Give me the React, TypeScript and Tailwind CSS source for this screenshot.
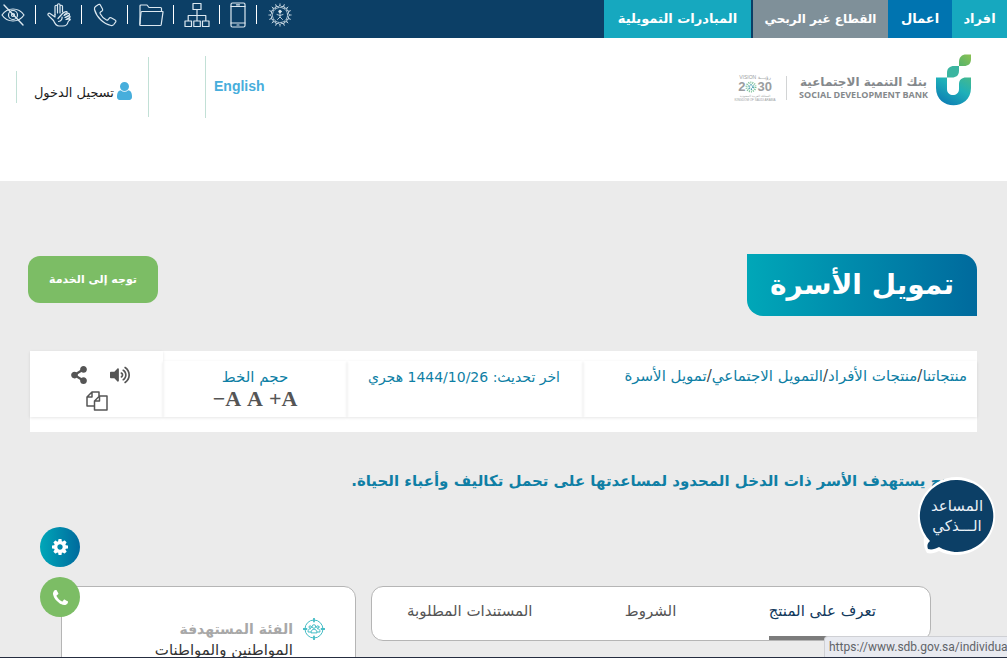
import React from "react";
import { FaVolumeUp, FaShareAlt } from "react-icons/fa";

const thin = {
  fill: "none",
  stroke: "currentColor",
  strokeWidth: 1.2,
  strokeLinecap: "round" as const,
  strokeLinejoin: "round" as const,
};

function EyeOffIcon() {
  return (
    <svg viewBox="0 0 24 24" className="h-6 w-6" {...thin}>
      <path d="M1 12c3-4.500 7-6 11-6s8 1.500 11 6c-3 4.500-7 6-11 6S4 16.500 1 12z" />
      <circle cx="12" cy="12" r="4.500" />
      <circle cx="12" cy="12" r="1.500" />
      <path d="M3 2l19 20" strokeWidth="1.400" />
    </svg>
  );
}

function HandsIcon() {
  return (
    <svg viewBox="0 0 24 24" className="h-6 w-6" {...thin}>
      <path d="M8 11.500V3.500a1.200 1.200 0 0 1 2.500 0V10M10.500 9V2a1.200 1.200 0 0 1 2.500 0v8M13 9V3.500a1.200 1.200 0 0 1 2.500 0V9" />
      <path d="M8 11.500v2.500L3 10.500c-1.300-.8-2.700.6-1.700 1.800l5.200 5.200c1 2.500 2.500 5.500 5.500 5.500h4c3.500 0 4.500-1.500 5-4l1.800-2.500M11 15.500l4-4.500c1-1 2.500-2 4-2.300 1.500-.2 1.500 1.300.5 1.600l-2 1.200" />
      <path d="M17 12.500l4-2c1.300-.5 2 1 .9 1.700L18 14.500M18.500 14.500l3.300-1.500c1.200-.4 1.800 1 .7 1.600L19 16.500M19.500 16.500l2.700-.7c1.100-.2 1.400 1.100.4 1.500M15 14c.5 2-1 4-3.500 4.500" />
    </svg>
  );
}

function HandsetIcon() {
  return (
    <svg viewBox="0 0 24 24" className="h-6 w-6" {...thin}>
      <path d="M2.500 3.500l3-2c.7-.4 1.400-.2 1.800.5L9.500 6c.4.800.2 1.500-.5 2L7.500 9c-.6.500-.6 1-.3 1.700 1.500 2.800 3.500 5 6.300 6.300.7.300 1.200.2 1.600-.4l1-1.300c.5-.7 1.300-.9 2-.5l4 2.200c.8.400 1 1.200.6 1.900l-1.900 2.600c-.7.900-1.700 1.200-2.800 1C10.500 21 3.500 14 1.500 6.500c-.2-1.200 0-2.200 1-3z" />
    </svg>
  );
}

function FolderIcon() {
  return (
    <svg viewBox="0 0 26 24" className="h-6 w-[26px]" {...thin}>
      <path d="M2 21V3c0-.6.400-1 1-1h6l2 2.500h11.500c.6 0 1 .4 1 1V8" />
      <path d="M4 8.500h20.500c.4 0 .6.300.5.700l-1.800 12.500c-.1.500-.4.800-1 .8H2.500c-.6 0-.8-.4-.7-.9L3 9.300c.1-.5.500-.8 1-.8z" />
    </svg>
  );
}

function SitemapIcon() {
  return (
    <svg viewBox="0 0 26 26" className="h-[26px] w-[26px]" {...thin} strokeLinecap="butt">
      <path d="M9 1.500h8v6H9zM1 19h6.500v5.500H1zM9.800 19h6.500v5.500H9.800zM18.500 19H25v5.500h-6.500zM13 7.500V19M4.200 19v-5.500h17.600V19" />
    </svg>
  );
}

function MobileIcon() {
  return (
    <svg viewBox="0 0 16 26" className="h-[26px] w-4" {...thin}>
      <rect x="1" y="1" width="14" height="24" rx="1.500" />
      <path d="M1 4.500h14M1 21h14M6.500 2.800h3M7 23h2" />
    </svg>
  );
}

function EmblemIcon() {
  const rays = Array.from({ length: 16 }, (_, i) => i * 22.5);
  return (
    <svg viewBox="0 0 24 24" className="h-6 w-6" {...thin} strokeWidth="0.8">
      <circle cx="12" cy="12" r="7.500" strokeDasharray="1.500 1" />
      {rays.map((a) => (
        <path key={a} d="M12 .8v1.400M10.500 3.800L12 2.300l1.500 1.500" transform={`rotate(${a} 12 12)`} />
      ))}
      <circle cx="12" cy="8.500" r="1.300" fill="currentColor" />
      <path d="M12 10v4M9 11.500l3 1 3-1M9.500 16.500l2.500-2.500 2.500 2.500" />
    </svg>
  );
}

function UserIcon() {
  return (
    <svg viewBox="256 128 1280 1536" className="-mt-1 h-[18px] w-[15px] text-[#47aedc]" fill="currentColor">
      <path d="M1536 1399q0 109-62.500 187t-150.500 78h-854q-88 0-150.500-78t-62.500-187q0-85 8.500-160.500t31.500-152 58.500-131 94-89 134.500-34.500q131 128 313 128t313-128q76 0 134.500 34.500t94 89 58.500 131 31.500 152 8.500 160.500zm-256-887q0 159-112.500 271.500t-271.500 112.500-271.500-112.500-112.500-271.500 112.500-271.500 271.500-112.500 271.500 112.500 112.500 271.500z" />
    </svg>
  );
}

function CogIcon() {
  return (
    <svg viewBox="0 128 1536 1536" className="h-4 w-4" fill="currentColor">
      <path d="M1024 896q0-106-75-181t-181-75-181 75-75 181 75 181 181 75 181-75 75-181zm512-109v222q0 12-8 23t-20 13l-185 28q-19 54-39 91 35 50 107 138 10 12 10 25t-9 23q-27 37-99 108t-94 71q-12 0-26-9l-138-108q-44 23-91 38-16 136-29 186-7 28-36 28h-222q-14 0-24.500-8.500t-11.500-21.500l-28-184q-49-16-90-37l-141 107q-10 9-25 9-14 0-25-11-126-114-165-168-7-10-7-23 0-12 8-23 15-21 51-66.500t54-70.500q-27-50-41-99l-183-27q-13-2-21-12.500t-8-23.500v-222q0-12 8-23t19-13l186-28q14-46 39-92-40-57-107-138-10-12-10-24 0-10 9-23 26-36 98.500-107.500t94.500-71.500q13 0 26 10l138 107q44-23 91-38 16-136 29-186 7-28 36-28h222q14 0 24.500 8.500t11.500 21.500l28 184q49 16 90 37l142-107q9-9 24-9 13 0 25 10 129 119 165 170 7 8 7 22 0 12-8 23-15 21-51 66.500t-54 70.500q26 50 41 98l183 28q13 2 21 12.500t8 23.500z" />
    </svg>
  );
}

function PhoneIcon() {
  return (
    <svg viewBox="0 128 1408 1408" className="h-[15px] w-[15px]" fill="currentColor">
      <path d="M1408 1240q0 27-10 70.500t-21 68.500q-21 50-122 106-94 51-186 51-27 0-53-3.500t-57.500-12.500-47-14.500-55.500-20.500-49-18q-98-35-175-83-127-79-264-216t-216-264q-48-77-83-175-3-9-18-49t-20.500-55.500-14.500-47-12.500-57.500-3.500-53q0-92 51-186 56-101 106-122 25-11 68.500-21t70.500-10q14 0 21 3 18 6 53 76 11 19 30 54t35 63.500 31 53.500q3 4 17.500 25t21.500 35.500 7 28.500q0 20-28.500 50t-62 55-62 53-28.500 46q0 9 5 22.500t8.500 20.500 14 24 11.500 19q76 137 174 235t235 174q2 1 19 11.500t24 14 20.500 8.500 22.500 5q18 0 46-28.500t53-62 55-62 50-28.500q14 0 28.500 7t35.500 21.500 25 17.500q25 15 53.500 31t63.500 35 54 30q70 35 76 53 3 7 3 21z" />
    </svg>
  );
}

function CopyIcon() {
  return (
    <svg viewBox="0 0 22 20" className="h-5 w-[22px]" fill="none" stroke="currentColor" strokeWidth="1.500" strokeLinejoin="round">
      <path d="M8 15H1V6l5-5h7v4M6 1v5H1" />
      <path d="M8.500 10l5-5H21v14H8.500zM13.500 5v5h-5" />
    </svg>
  );
}

function AudienceIcon() {
  return (
    <svg viewBox="0 0 22 22" className="h-[22px] w-[22px] text-[#46bdc6]" {...thin} strokeWidth="1">
      <circle cx="11" cy="11" r="9" />
      <path d="M11 .5v3M11 18.500v3M.5 11h3M18.500 11h3" strokeWidth="1.800" />
      <circle cx="11" cy="8.500" r="1.800" />
      <circle cx="7.200" cy="9" r="1.200" />
      <circle cx="14.800" cy="9" r="1.200" />
      <path d="M8 14.500c0-4.500 6-4.500 6 0zM8 14H5c0-2.500 1-3.300 2.500-3.300M14 14h3c0-2.500-1-3.300-2.500-3.300" />
    </svg>
  );
}

function BankMark() {
  return (
    <svg viewBox="0 0 36 52" className="h-[52px] w-9" aria-hidden="true">
      <defs>
        <linearGradient id="cup" x1="1" y1="0" x2="0.300" y2="1">
          <stop offset="0" stopColor="#45b98c" />
          <stop offset="0.450" stopColor="#1fb0b9" />
          <stop offset="1" stopColor="#0e7fb4" />
        </linearGradient>
        <linearGradient id="leaf" x1="1" y1="0" x2="0" y2="1">
          <stop offset="0" stopColor="#8cc152" />
          <stop offset="1" stopColor="#54b36b" />
        </linearGradient>
      </defs>
      <path d="M24 12V8c0-5 3-7.500 7-7.500h5V5c0 5-3 7-7 7z" fill="url(#leaf)" />
      <path d="M12 23.500V19c0-5 3-7 7-7h5v4.500c0 5-3 7-7 7z" fill="#3bb5a0" />
      <path d="M1 23.500h11V35c0 8 12 8 12 0v-4.500c0-5 3-7 7-7h5V34c0 23-35 23-35 0z" fill="url(#cup)" />
    </svg>
  );
}

const tools = [
  { label: "ضعاف البصر", icon: <EyeOffIcon />, size: "w-6" },
  { label: "لغة الإشارة", icon: <HandsIcon />, size: "w-[25px]" },
  { label: "اتصل بنا", icon: <HandsetIcon />, size: "w-[25px]" },
  { label: "الملفات", icon: <FolderIcon />, size: "w-[25px]" },
  { label: "خريطة الموقع", icon: <SitemapIcon />, size: "w-[25px]" },
  { label: "تطبيق الجوال", icon: <MobileIcon />, size: "w-4" },
  { label: "المنصة الوطنية", icon: <EmblemIcon />, size: "w-[25px]" },
];

const crumbs = ["منتجاتنا", "منتجات الأفراد", "التمويل الاجتماعي", "تمويل الأسرة"];

export default function App() {
  return (
    <div
      dir="rtl"
      className="relative flex h-screen flex-col overflow-hidden bg-[#ebebeb] font-['DejaVu_Sans',sans-serif] text-sm text-[#0f7fa5]"
    >
      <div className="flex h-[38px] shrink-0 justify-between bg-[#0c3f66] text-white">
        <nav className="flex text-[13px] font-bold">
          <a href="#individuals" className="flex w-[55px] items-center justify-center bg-[#16a8bf]">افراد</a>
          <a href="#business" className="flex w-16 items-center justify-center bg-[#0074b0]">اعمال</a>
          <a href="#nonprofit" className="flex w-[135px] items-center justify-center bg-[#7f9099] text-xs">القطاع غير الربحي</a>
          <a href="#initiatives" className="ms-0.5 flex w-[147px] items-center justify-center bg-[#16a8bf]">المبادرات التمويلية</a>
        </nav>
        <ul dir="ltr" className="flex h-[29px] items-center pl-px text-[#dce8f0]">
          {tools.map((tool, i) => (
            <li key={tool.label} className="flex items-center">
              {i > 0 && <span className="mx-[10px] h-[19px] w-px bg-white" />}
              <a href="#tool" aria-label={tool.label} className={`flex justify-center ${tool.size}`}>
                <span className="shrink-0">{tool.icon}</span>
              </a>
            </li>
          ))}
        </ul>
      </div>

      <header className="flex h-[143px] shrink-0 justify-between bg-white ps-9 pe-4">
        <div className="mt-4 flex h-[52px] items-center">
          <BankMark />
          <div className="ms-[7px] mt-4 flex flex-col items-center text-[#85898c]">
            <span className="text-xs font-bold leading-[13px]">بنك التنمية الاجتماعية</span>
            <span className="font-['Open_Sans',sans-serif] text-[9px] font-bold leading-[11px]">SOCIAL DEVELOPMENT BANK</span>
          </div>
          <span className="ms-3 mt-4 h-6 w-px bg-[#d2d4d5]" />
          <div className="ms-3 mt-4 flex w-[38px] flex-col items-center whitespace-nowrap font-['Liberation_Sans','DejaVu_Sans',sans-serif] text-[#9a9da0]">
            <span dir="ltr" className="text-[5px] leading-[6px]">VISION رؤيـــة</span>
            <span dir="ltr" className="flex items-center text-[13px] font-bold leading-[14px]">
              2
              <svg viewBox="0 0 12 12" className="h-3 w-3" fill="none" strokeWidth="2" strokeDasharray="1 1">
                <circle cx="6" cy="6" r="4.500" stroke="#7fc49c" />
                <circle cx="6" cy="6" r="2" stroke="#4ba4b0" />
              </svg>
              30
            </span>
            <span className="text-[3px] leading-[4px]">المملكة العربية السعودية</span>
            <span className="text-[3px] leading-[4px]">KINGDOM OF SAUDI ARABIA</span>
          </div>
        </div>
        <div className="flex">
          <div className="mt-[18px] flex h-[62px] w-[60px] items-center justify-end border-e border-[#c2e0d6] pb-0.5">
            <a href="#en" className="me-2 font-['Liberation_Sans',sans-serif] text-sm font-bold text-[#47aedc]">English</a>
          </div>
          <div className="ms-14 mt-[19px] h-[60px] w-px bg-[#c2e0d6]" />
          <div className="mt-[33px] flex h-8 w-[132px] justify-start border-e border-[#c2e0d6] ps-4">
            <a href="#login" className="mt-[10px] flex h-6 items-center gap-[3px] text-[13px] text-[#1c1c1c]">
              <UserIcon />
              تسجيل الدخول
            </a>
          </div>
        </div>
      </header>

      <main className="flex flex-col ps-[30px] pe-[28px] pt-[73px]">
        <div className="flex items-start justify-between">
          <h1 className="flex h-[62px] w-[230px] items-center justify-center rounded-tr-[16px] rounded-bl-[16px] bg-gradient-to-l from-[#006a9d] to-[#00a7b8] text-[28px] font-bold text-white">
            تمويل الأسرة
          </h1>
          <button className="mt-0.5 h-[47px] w-[130px] rounded-xl bg-[#7cbd65] text-[11px] font-bold text-white">توجه إلى الخدمة</button>
        </div>

        <section className="me-0.5 mt-[35px] flex bg-white pb-[15px]">
          <nav className="mt-[10px] flex h-14 flex-1 px-[10px] pt-2 shadow-[0_1px_3px_#0000001a]">
            <ol className="flex h-4 items-center whitespace-nowrap text-[15px]">
              {crumbs.map((c, i) => (
                <li key={c}>
                  {i > 0 && <span className="text-[#444]">/</span>}
                  <a href="#crumb">{c}</a>
                </li>
              ))}
            </ol>
          </nav>
          <div className="mt-[10px] h-14 w-[236px] whitespace-nowrap ps-[23px] pt-2 leading-4 shadow-[0_1px_3px_#0000001a]">
            اخر تحديث: 1444/10/26 هجري
          </div>
          <div className="mt-[10px] flex h-14 w-[184px] flex-col items-center pt-2 shadow-[0_1px_3px_#0000001a]">
            <span className="text-[15px] leading-4">حجم الخط</span>
            <div dir="ltr" className="mt-0.5 flex gap-1.5 font-['Liberation_Serif',serif] text-[22px] font-bold leading-6 text-[#555]">
              <button aria-label="تصغير الخط">−A</button>
              <button aria-label="الخط الأصلي">A</button>
              <button aria-label="تكبير الخط">+A</button>
            </div>
          </div>
          <div className="flex h-[66px] w-[133px] flex-col items-center pt-[14px] text-[#555] shadow-[0_1px_3px_#0000001a]">
            <div className="flex gap-[22px] pe-1.5">
              <button aria-label="استماع"><FaVolumeUp className="h-5 w-5" /></button>
              <button aria-label="مشاركة"><FaShareAlt className="h-[18px] w-[18px]" /></button>
            </div>
            <button aria-label="نسخ" className="mt-1.5"><CopyIcon /></button>
          </div>
        </section>

        <p className="mt-[37px] whitespace-nowrap ps-[14px] text-[15px] font-bold leading-6">
          منتج يستهدف الأسر ذات الدخل المحدود لمساعدتها على تحمل تكاليف وأعباء الحياة.
        </p>

        <div className="mt-[93px] flex items-start ps-[46px] pe-[33px]">
          <div className="flex h-[55px] flex-1 items-stretch justify-between rounded-xl border border-[#b5b5b5] bg-white ps-[54px] pe-[35px] text-[15px] text-[#555]">
            <button className="border-b-4 border-[#7c7c7c] text-[#12395c]">تعرف على المنتج</button>
            <button className="border-b-4 border-transparent">الشروط</button>
            <button className="border-b-4 border-transparent">المستندات المطلوبة</button>
          </div>
          <article className="ms-[15px] h-[300px] w-[295px] rounded-xl border border-[#b5b5b5] bg-white ps-[30px] pt-[31px]">
            <div className="flex gap-[10px]">
              <AudienceIcon />
              <div>
                <h2 className="text-sm font-bold leading-[22px] text-[#a8a8a8]">الفئة المستهدفة</h2>
                <p className="text-[15px] leading-5 text-[#333]">المواطنين والمواطنات</p>
              </div>
            </div>
          </article>
        </div>
      </main>

      <a href="#assistant" className="absolute right-[10px] top-[475px] h-[82px] w-[80px]">
        <svg viewBox="0 0 80 82" className="absolute inset-0 h-full w-full" aria-hidden="true">
          <path d="M40 2a39 39 0 1 1-18 74c-4 2-8 3-12 2-2-3-4-8-3-16A39 39 0 0 1 40 2z" fill="#fff" />
          <path d="M40 5a36 36 0 1 1-18 67c-4 2-7 3-11 2-1-3-1-5 2-8A36 36 0 0 1 40 5z" fill="#0c3f66" />
        </svg>
        <span className="relative flex h-[82px] flex-col justify-center text-center text-[15px] leading-5 text-[#e8f0f6]">
          <span>المساعد</span>
          <span>الـــذكي</span>
        </span>
      </a>

      <div className="absolute left-10 top-[527px] flex flex-col gap-[10px] text-white">
        <button aria-label="الإعدادات" className="flex h-10 w-10 items-center justify-center rounded-full bg-gradient-to-l from-[#006a9d] to-[#00a7b8]">
          <CogIcon />
        </button>
        <button aria-label="اتصال" className="flex h-10 w-10 items-center justify-center rounded-full bg-[#7cbd65]">
          <PhoneIcon />
        </button>
      </div>

      <div dir="ltr" className="absolute bottom-0 right-0 h-[22px] w-[183px] overflow-hidden whitespace-nowrap rounded-tl-sm border-l border-t border-[#cfd0d4] bg-[#e8eaf0] pl-1 font-['Roboto',sans-serif] text-xs leading-5 text-[#5f6368]">
        https://www.sdb.gov.sa/individua
      </div>
      <div className="absolute inset-x-0 bottom-0 h-px bg-[#252d40]" />
    </div>
  );
}
